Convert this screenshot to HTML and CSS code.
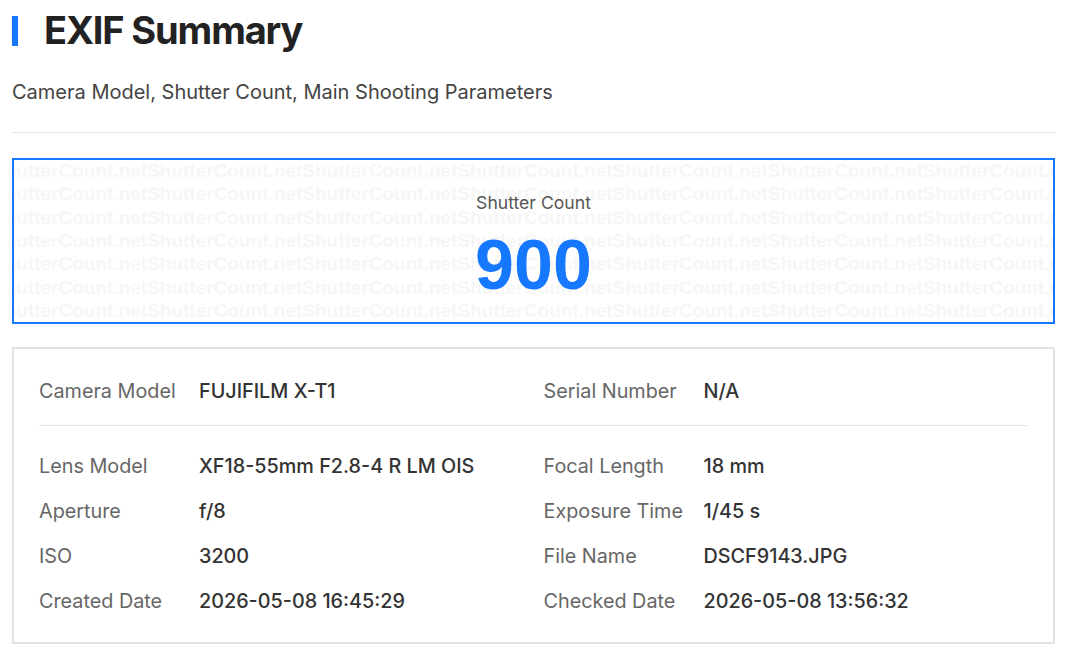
FILE: index.html
```html
<!DOCTYPE html>
<html lang="en">
<head>
<meta charset="utf-8">
<title>EXIF Summary</title>
<link rel="stylesheet" href="styles.css">
</head>
<body>
<main class="page">
  <header class="heading">
    <span class="heading-bar"></span>
    <h1 class="heading-title">EXIF Summary</h1>
  </header>
  <p class="subtitle">Camera Model, Shutter Count, Main Shooting Parameters</p>
  <hr class="rule">

  <section class="count-card">
    <div class="watermark" aria-hidden="true">
      <div class="watermark-line">ShutterCount.netShutterCount.netShutterCount.netShutterCount.netShutterCount.netShutterCount.netShutterCount.netShutterCount.net</div>
      <div class="watermark-line">ShutterCount.netShutterCount.netShutterCount.netShutterCount.netShutterCount.netShutterCount.netShutterCount.netShutterCount.net</div>
      <div class="watermark-line">ShutterCount.netShutterCount.netShutterCount.netShutterCount.netShutterCount.netShutterCount.netShutterCount.netShutterCount.net</div>
      <div class="watermark-line">ShutterCount.netShutterCount.netShutterCount.netShutterCount.netShutterCount.netShutterCount.netShutterCount.netShutterCount.net</div>
      <div class="watermark-line">ShutterCount.netShutterCount.netShutterCount.netShutterCount.netShutterCount.netShutterCount.netShutterCount.netShutterCount.net</div>
      <div class="watermark-line">ShutterCount.netShutterCount.netShutterCount.netShutterCount.netShutterCount.netShutterCount.netShutterCount.netShutterCount.net</div>
      <div class="watermark-line">ShutterCount.netShutterCount.netShutterCount.netShutterCount.netShutterCount.netShutterCount.netShutterCount.netShutterCount.net</div>
      <div class="watermark-line">ShutterCount.netShutterCount.netShutterCount.netShutterCount.netShutterCount.netShutterCount.netShutterCount.netShutterCount.net</div>
    </div>
    <div class="count-label">Shutter Count</div>
    <div class="count-value">900</div>
  </section>

  <section class="details">
    <div class="details-grid details-top">
      <div class="field"><span class="field-label">Camera Model</span><span class="field-value">FUJIFILM X-T1</span></div>
      <div class="field"><span class="field-label">Serial Number</span><span class="field-value">N/A</span></div>
    </div>
    <hr class="details-rule">
    <div class="details-grid">
      <div class="field"><span class="field-label">Lens Model</span><span class="field-value">XF18-55mm F2.8-4 R LM OIS</span></div>
      <div class="field"><span class="field-label">Focal Length</span><span class="field-value">18 mm</span></div>
      <div class="field"><span class="field-label">Aperture</span><span class="field-value">f/8</span></div>
      <div class="field"><span class="field-label">Exposure Time</span><span class="field-value">1/45 s</span></div>
      <div class="field"><span class="field-label">ISO</span><span class="field-value">3200</span></div>
      <div class="field"><span class="field-label">File Name</span><span class="field-value">DSCF9143.JPG</span></div>
      <div class="field"><span class="field-label">Created Date</span><span class="field-value">2026-05-08 16:45:29</span></div>
      <div class="field"><span class="field-label">Checked Date</span><span class="field-value">2026-05-08 13:56:32</span></div>
    </div>
  </section>
</main>
</body>
</html>
```

FILE: styles.css
```css
* {
  box-sizing: border-box;
}

html, body {
  margin: 0;
  background: #ffffff;
}

body {
  font-family: Inter, "Noto Sans", "Liberation Sans", sans-serif;
  color: #333333;
}

.page {
  padding: 6px 12px 10px;
}

/* Title with accent bar */
.heading {
  display: flex;
  align-items: center;
  gap: 26px;
  height: 48px;
}

.heading-bar {
  flex: 0 0 6px;
  height: 30px;
  margin-top: 1px;
  background: #1677ff;
}

.heading-title {
  margin: 0;
  font-size: 38px;
  line-height: 48px;
  font-weight: 700;
  color: #222222;
  letter-spacing: -1.15px;
}

.subtitle {
  margin: 23px 0 0;
  font-size: 20px;
  line-height: 30px;
  color: #444444;
}

.rule {
  margin: 25px 0 25px;
  border: 0;
  border-top: 1px solid #e3e3e3;
  height: 0;
}

/* Shutter count card */
.count-card {
  position: relative;
  overflow: hidden;
  border: 2px solid #1677ff;
  height: 166px;
  padding-top: 30px;
  text-align: center;
}

.watermark {
  position: absolute;
  top: -1px;
  left: -22px;
  right: 0;
  bottom: 0;
  z-index: 0;
  font-family: "Liberation Sans", Arial, sans-serif;
  font-weight: 700;
  font-size: 19px;
  line-height: 23.33px;
  color: #f6f6f6;
  white-space: nowrap;
  text-align: left;
  user-select: none;
}

.count-label,
.count-value {
  position: relative;
  z-index: 1;
}

.count-label {
  font-size: 17.6px;
  line-height: 26.4px;
  color: #555555;
}

.count-value {
  margin-top: 13px;
  font-family: "Liberation Sans", Arial, sans-serif;
  font-weight: 700;
  font-size: 70px;
  line-height: 72px;
  color: #1677ff;
}

/* Detail table */
.details {
  margin-top: 23px;
  border: 2px solid #e3e3e3;
  padding: 19px 25px 18px;
}

.details-grid {
  display: grid;
  grid-template-columns: 1fr 1fr;
  column-gap: 20px;
}

.field {
  display: flex;
  align-items: center;
  height: 45px;
  font-size: 19.8px;
  white-space: nowrap;
}

.field-label {
  flex: 0 0 160px;
  color: #666666;
}

.field-value {
  color: #333333;
  font-weight: 500;
}

.details-rule {
  margin: 12px 0 17.5px;
  border: 0;
  border-top: 1px solid #e3e3e3;
  height: 0;
}
```
